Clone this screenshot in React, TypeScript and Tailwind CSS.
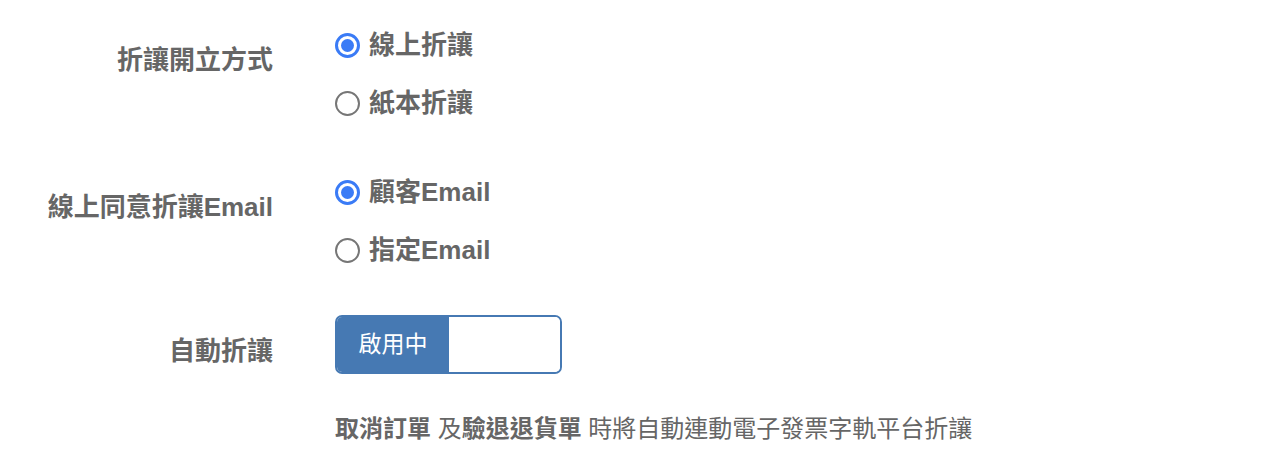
import React from "react";

function Radio({ checked, label }: { checked: boolean; label: string }) {
  return (
    <div className="flex h-[58px] items-center">
      <div className="flex w-[25px] justify-center">
        {checked ? (
          <div className="flex h-[25px] w-[25px] items-center justify-center rounded-full border-[3px] border-[#3a7bf6] bg-white">
            <div className="h-[13px] w-[13px] rounded-full bg-[#3a7bf6]" />
          </div>
        ) : (
          <div className="h-[25px] w-[25px] rounded-full border-[2px] border-[#767676] bg-white" />
        )}
      </div>
      <span className="ml-[9px] text-[26px] font-bold leading-[30px] text-[#666]">{label}</span>
    </div>
  );
}

export default function App() {
  return (
    <div
      className="min-h-[470px] w-[1286px] bg-white pt-[16px] text-[#666]"
      style={{ fontFamily: '"Liberation Sans", "Noto Sans CJK TC", sans-serif' }}
    >
      <div className="grid grid-cols-[273px_1fr] gap-x-[62px]">
        <div className="pt-[29px] text-right text-[26px] font-bold leading-[30px]">折讓開立方式</div>
        <div>
          <Radio checked label="線上折讓" />
          <Radio checked={false} label="紙本折讓" />
        </div>

        <div className="mt-[31px] pt-[29px] text-right text-[26px] font-bold leading-[30px]">線上同意折讓Email</div>
        <div className="mt-[31px]">
          <Radio checked label="顧客Email" />
          <Radio checked={false} label="指定Email" />
        </div>

        <div className="mt-[36px] pt-[21px] text-right text-[26px] font-bold leading-[30px]">自動折讓</div>
        <div className="mt-[36px]">
          <div className="flex h-[59px] w-[227px] overflow-hidden rounded-[7px] border-2 border-[#4679b3]">
            <div className="flex w-[112px] items-center justify-center bg-[#4679b3] text-[23px] leading-none text-white">
              啟用中
            </div>
            <div className="flex-1 bg-white" />
          </div>
        </div>

        <div />
        <div className="mt-[37px] text-[24px] leading-[36px] text-[#666]">
          <span className="font-bold">取消訂單</span> 及<span className="font-bold">驗退退貨單</span> 時將自動連動電子發票字軌平台折讓
        </div>
      </div>
    </div>
  );
}
